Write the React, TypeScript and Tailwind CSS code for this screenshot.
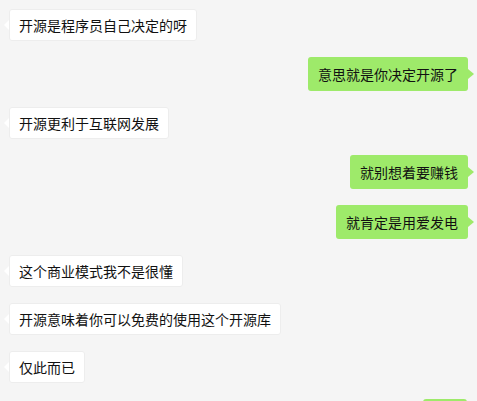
import React from "react";

type Msg = { text: string; me: boolean };

const msgs: Msg[] = [
  { text: "开源是程序员自己决定的呀", me: false },
  { text: "意思就是你决定开源了", me: true },
  { text: "开源更利于互联网发展", me: false },
  { text: "就别想着要赚钱", me: true },
  { text: "就肯定是用爱发电", me: true },
  { text: "这个商业模式我不是很懂", me: false },
  { text: "开源意味着你可以免费的使用这个开源库", me: false },
  { text: "仅此而已", me: false },
];

function Bubble({ m }: { m: Msg }) {
  if (m.me) {
    return (
      <div className="flex justify-end pr-[9px]">
        <div className="relative rounded-[3px] bg-[#9eea6a] px-[10px] py-[6px] text-[14px] leading-[22px] text-[#111]">
          {m.text}
          <span className="absolute right-[-6px] top-1/2 -translate-y-1/2 h-0 w-0 border-y-[5px] border-l-[6px] border-y-transparent border-l-[#9eea6a]" />
        </div>
      </div>
    );
  }
  return (
    <div className="flex justify-start pl-[9px]">
      <div className="relative rounded-[3px] bg-white px-[10px] py-[5px] text-[14px] leading-[22px] text-[#111] shadow-[0_0_0_1px_#ededed_inset]">
        {m.text}
        <span className="absolute left-[-5px] top-1/2 -translate-y-1/2 h-0 w-0 border-y-[5px] border-r-[5px] border-y-transparent border-r-white" />
      </div>
    </div>
  );
}

export default function App() {
  return (
    <div
      className="h-[401px] w-[477px] overflow-hidden bg-[#f5f5f5]"
      style={{ fontFamily: '"Noto Sans CJK SC", "Noto Sans", sans-serif' }}
    >
      <div className="flex flex-col gap-[16px] pt-[9px]">
        {msgs.map((m, i) => (
          <Bubble key={i} m={m} />
        ))}
        <div className="flex justify-end pr-[10px]">
          <div className="h-[34px] w-[44px] rounded-[3px] bg-[#9eea6a]" />
        </div>
      </div>
    </div>
  );
}
